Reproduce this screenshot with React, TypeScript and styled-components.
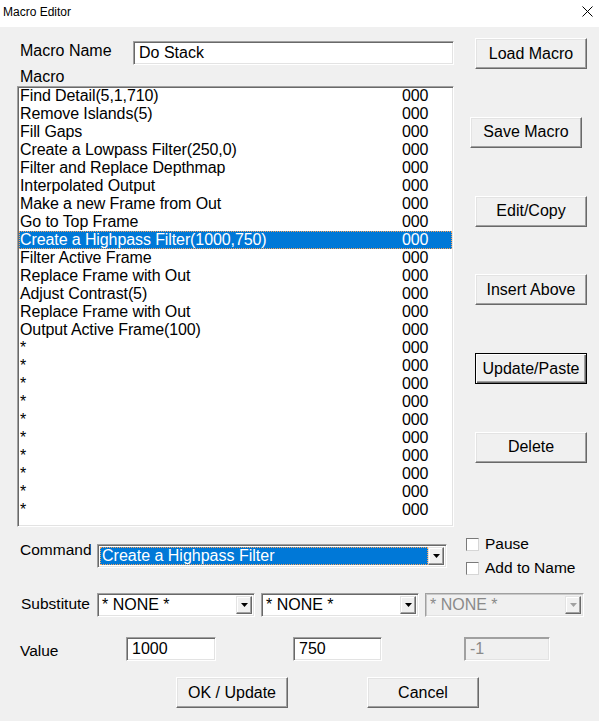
import styled, { createGlobalStyle } from "styled-components";

const GlobalStyle = createGlobalStyle`
  html, body {
    margin: 0;
    padding: 0;
    background: #f0f0f0;
  }
  * {
    box-sizing: border-box;
  }
`;

const steps = [
  "Find Detail(5,1,710)",
  "Remove Islands(5)",
  "Fill Gaps",
  "Create a Lowpass Filter(250,0)",
  "Filter and Replace Depthmap",
  "Interpolated Output",
  "Make a new Frame from Out",
  "Go to Top Frame",
  "Create a Highpass Filter(1000,750)",
  "Filter Active Frame",
  "Replace Frame with Out",
  "Adjust Contrast(5)",
  "Replace Frame with Out",
  "Output Active Frame(100)",
  ...Array(10).fill("*"),
];

const SELECTED = 8;

const Window = styled.div`
  width: 599px;
  height: 721px;
  background: #f0f0f0;
  font-family: "Liberation Sans", Arial, sans-serif;
  font-size: 16px;
  color: #000;
  overflow: hidden;
  display: flex;
  flex-direction: column;
`;

const TitleBar = styled.div`
  height: 27px;
  background: #fff;
  display: flex;
  align-items: center;
  justify-content: space-between;
  padding: 0 6px 4px 3px;
  font-size: 12px;
`;

const Main = styled.div`
  padding: 11px 0 0 17px;
  display: flex;
  flex-direction: column;
`;

const TopSection = styled.div`
  display: flex;
  align-items: flex-start;
`;

const LeftCol = styled.div`
  width: 437px;
  display: flex;
  flex-direction: column;
`;

const NameRow = styled.div`
  margin-top: 3px;
  display: flex;
  align-items: flex-start;
`;

const FieldLabel = styled.div<{
  $width: number;
  $size?: number;
  $line?: number;
  $top?: number;
  $indent?: number;
}>`
  width: ${({ $width }) => $width}px;
  margin-top: ${({ $top }) => $top ?? 0}px;
  padding-left: ${({ $indent }) => $indent ?? 3}px;
  font-size: ${({ $size }) => $size ?? 16}px;
  line-height: ${({ $line }) => $line ?? 20}px;
  white-space: nowrap;
`;

const TextBox = styled.input<{ $width: number; $gap?: number }>`
  width: ${({ $width }) => $width}px;
  height: 24px;
  margin-left: ${({ $gap }) => $gap ?? 0}px;
  padding: 0 5px;
  font-family: "Liberation Sans", Arial, sans-serif;
  font-size: 16px;
  color: #000;
  background: #fff;
  border: 1px solid;
  border-color: #a0a0a0 #fff #fff #a0a0a0;
  box-shadow: inset 1px 1px #696969, inset -1px -1px #e3e3e3;
  outline: none;
  &:disabled {
    background: #f0f0f0;
    color: #8a8a8a;
    box-shadow: inset 1px 1px #a0a0a0, inset -1px -1px #e3e3e3;
  }
`;

const ListLabel = styled.div`
  padding: 2px 0 0 3px;
  line-height: 19px;
  height: 21px;
`;

const ListBox = styled.div`
  height: 441px;
  background: #fff;
  border: 1px solid;
  border-color: #a0a0a0 #fff #fff #a0a0a0;
  box-shadow: inset 1px 1px #696969, inset -1px -1px #e3e3e3;
  padding: 0 1px;
`;

const ListRow = styled.div<{ $selected?: boolean }>`
  height: 18px;
  line-height: 18px;
  display: grid;
  grid-template-columns: 382px 1fr;
  padding-left: 1px;
  letter-spacing: -0.1px;
  white-space: nowrap;
  background: ${({ $selected }) => ($selected ? "#0078d7" : "transparent")};
  color: ${({ $selected }) => ($selected ? "#fff" : "#000")};
  outline: ${({ $selected }) => ($selected ? "1px dotted #f7a35c" : "none")};
  outline-offset: -1px;
`;

const ButtonColumn = styled.div`
  margin-left: 21px;
  display: flex;
  flex-direction: column;
  gap: 47.8px;
`;

const PushButton = styled.button<{ $default?: boolean; $shift?: number }>`
  width: 112px;
  height: 31px;
  margin-left: ${({ $shift }) => $shift ?? 0}px;
  padding: 0;
  background: #f0f0f0;
  font-family: "Liberation Sans", Arial, sans-serif;
  font-size: 16px;
  color: #000;
  border: 1px solid;
  border-color: ${({ $default }) =>
    $default ? "#000" : "#fff #696969 #696969 #fff"};
  box-shadow: ${({ $default }) =>
    $default
      ? "inset 1px 1px #fff, inset -1px -1px #696969, inset -2px -2px #a0a0a0"
      : "inset -1px -1px #a0a0a0, inset 1px 1px #e3e3e3"};
  cursor: pointer;
`;

const CommandRow = styled.div`
  margin-top: 7px;
  display: flex;
  align-items: flex-start;
`;

const ComboSlot = styled.div`
  margin-top: 10px;
`;

const Combo = styled.div<{ $width: number; $disabled?: boolean }>`
  width: ${({ $width }) => $width}px;
  height: 24px;
  display: flex;
  padding: 2px;
  background: ${({ $disabled }) => ($disabled ? "#f0f0f0" : "#fff")};
  color: ${({ $disabled }) => ($disabled ? "#8a8a8a" : "#000")};
  border: 1px solid;
  border-color: #a0a0a0 #fff #fff #a0a0a0;
  box-shadow: ${({ $disabled }) =>
    $disabled
      ? "inset 1px 1px #c8c8c8, inset -1px -1px #e3e3e3"
      : "inset 1px 1px #696969, inset -1px -1px #e3e3e3"};
`;

const ComboValue = styled.div<{ $focused?: boolean }>`
  flex: 1;
  padding-left: 2px;
  line-height: 18px;
  white-space: nowrap;
  overflow: hidden;
  background: ${({ $focused }) => ($focused ? "#0078d7" : "transparent")};
  color: ${({ $focused }) => ($focused ? "#fff" : "inherit")};
  outline: ${({ $focused }) => ($focused ? "1px dotted #f7a35c" : "none")};
  outline-offset: -1px;
`;

const ComboArrow = styled.div<{ $disabled?: boolean }>`
  width: 16px;
  display: flex;
  align-items: center;
  justify-content: center;
  background: #f0f0f0;
  border: 1px solid;
  border-color: #e3e3e3 #696969 #696969 #e3e3e3;
  box-shadow: inset -1px -1px #a0a0a0, inset 1px 1px #fff;
  color: ${({ $disabled }) => ($disabled ? "#a0a0a0" : "#000")};
`;

const CheckColumn = styled.div`
  margin-left: 19px;
  display: flex;
  flex-direction: column;
  gap: 4px;
`;

const CheckRow = styled.label`
  height: 20px;
  display: flex;
  align-items: center;
  gap: 6px;
  font-size: 15.5px;
  white-space: nowrap;
`;

const CheckBox = styled.span`
  width: 13px;
  height: 13px;
  background: #fff;
  border: 1px solid;
  border-color: #7a7a7a #d6d6d6 #d6d6d6 #7a7a7a;
`;

const SubstituteRow = styled.div`
  margin-top: 15px;
  padding-left: 4px;
  display: flex;
  align-items: flex-start;
  gap: 6px;
`;

const ValueRow = styled.div`
  margin-top: 20px;
  display: flex;
  align-items: flex-start;
`;

const ActionRow = styled.div`
  margin-top: 14px;
  padding-left: 159px;
  display: flex;
  gap: 79px;
`;

const Arrow = () => (
  <svg width="7" height="4" viewBox="0 0 7 4">
    <polygon points="0,0 7,0 3.5,4" fill="currentColor" />
  </svg>
);

const CloseIcon = () => (
  <svg width="11" height="11" viewBox="0 0 11 11">
    <path d="M0.5 0.5 L10.5 10.5 M10.5 0.5 L0.5 10.5" stroke="#000" strokeWidth="1" />
  </svg>
);

const DropDown = ({
  width,
  value,
  focused,
  disabled,
}: {
  width: number;
  value: string;
  focused?: boolean;
  disabled?: boolean;
}) => (
  <Combo $width={width} $disabled={disabled}>
    <ComboValue $focused={focused}>{value}</ComboValue>
    <ComboArrow $disabled={disabled}>
      <Arrow />
    </ComboArrow>
  </Combo>
);

const App = () => {
  return (
    <Window>
      <GlobalStyle />
      <TitleBar>
        <span>Macro Editor</span>
        <CloseIcon />
      </TitleBar>
      <Main>
        <TopSection>
          <LeftCol>
            <NameRow>
              <FieldLabel $width={116}>Macro Name</FieldLabel>
              <TextBox $width={321} defaultValue="Do Stack" readOnly />
            </NameRow>
            <ListLabel>Macro</ListLabel>
            <ListBox>
              {steps.map((step, i) => (
                <ListRow key={i} $selected={i === SELECTED}>
                  <span>{step}</span>
                  <span>000</span>
                </ListRow>
              ))}
            </ListBox>
          </LeftCol>
          <ButtonColumn>
            <PushButton>Load Macro</PushButton>
            <PushButton $shift={-5}>Save Macro</PushButton>
            <PushButton>Edit/Copy</PushButton>
            <PushButton>Insert Above</PushButton>
            <PushButton $default>Update/Paste</PushButton>
            <PushButton>Delete</PushButton>
          </ButtonColumn>
        </TopSection>

        <CommandRow>
          <FieldLabel $width={80} $size={15.5} $top={6}>
            Command
          </FieldLabel>
          <ComboSlot>
            <DropDown width={350} value="Create a Highpass Filter" focused />
          </ComboSlot>
          <CheckColumn>
            <CheckRow>
              <CheckBox />
              Pause
            </CheckRow>
            <CheckRow>
              <CheckBox />
              Add to Name
            </CheckRow>
          </CheckColumn>
        </CommandRow>

        <SubstituteRow>
          <FieldLabel $width={70} $size={15.5} $line={22} $indent={0}>
            Substitute
          </FieldLabel>
          <DropDown width={158} value="* NONE *" />
          <DropDown width={158} value="* NONE *" />
          <DropDown width={159} value="* NONE *" disabled />
        </SubstituteRow>

        <ValueRow>
          <FieldLabel $width={109} $size={15.5} $line={24} $top={2}>
            Value
          </FieldLabel>
          <TextBox $width={90} defaultValue="1000" readOnly />
          <TextBox $width={89} $gap={77} defaultValue="750" readOnly />
          <TextBox $width={86} $gap={82} defaultValue="-1" disabled />
        </ValueRow>

        <ActionRow>
          <PushButton>OK / Update</PushButton>
          <PushButton>Cancel</PushButton>
        </ActionRow>
      </Main>
    </Window>
  );
};

export default App;
